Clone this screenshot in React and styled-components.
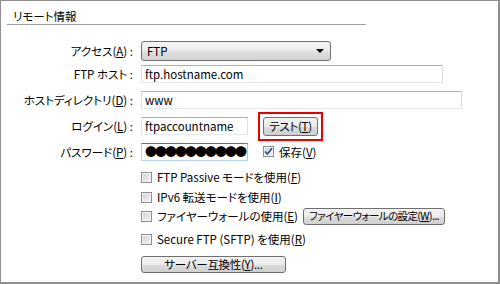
import React from "react";
import styled, { createGlobalStyle } from "styled-components";

const GlobalStyle = createGlobalStyle`
  html, body {
    margin: 0;
    padding: 0;
    background: #fff;
  }
  body {
    font-family: "Noto Sans CJK JP", "Noto Sans", sans-serif;
    font-size: 11.5px;
    color: #000;
  }
`;

function App() {
  return (
    <>
      <GlobalStyle />
      <Panel>
        <Heading>リモート情報</Heading>
        <Form>
          <Row $h={25}>
            <Label>
              アクセス(<Key>A</Key>) :
            </Label>
            <Select>
              <span>FTP</span>
              <Arrow />
            </Select>
          </Row>
          <Row $h={22}>
            <Label>FTP ホスト :</Label>
            <Field $w={302}>ftp.hostname.com</Field>
          </Row>
          <Row $h={30}>
            <Label>
              ホストディレクトリ(<Key>D</Key>) :
            </Label>
            <Field $w={321}>www</Field>
          </Row>
          <Row $h={22}>
            <Label>
              ログイン(<Key>L</Key>) :
            </Label>
            <Field $w={107}>ftpaccountname</Field>
            <Marked>
              <Button $w={55} $h={19}>
                テスト(<Key>T</Key>)
              </Button>
            </Marked>
          </Row>
          <Row $h={29}>
            <Label>
              パスワード(<Key>P</Key>) :
            </Label>
            <Field $w={107} $focus>
              <Dots>●●●●●●●●●●</Dots>
            </Field>
            <Check $ml={15}>
              <Box>
                <svg width="9" height="9" viewBox="0 0 9 9">
                  <path
                    d="M1 4.5 L3.4 7 L8 1.2"
                    fill="none"
                    stroke="#2c4fa8"
                    strokeWidth="1.8"
                  />
                </svg>
              </Box>
              <span>
                保存(<Key>V</Key>)
              </span>
            </Check>
          </Row>
          <Row $h={22} $indent>
            <Check>
              <Box />
              <span>
                FTP Passive モードを使用(<Key>F</Key>)
              </span>
            </Check>
          </Row>
          <Row $h={18} $indent>
            <Check>
              <Box />
              <span>
                IPv6 転送モードを使用(<Key>I</Key>)
              </span>
            </Check>
          </Row>
          <Row $h={20} $indent>
            <Check>
              <Box />
              <span>
                ファイヤーウォールの使用(<Key>E</Key>)
              </span>
            </Check>
            <Button $w={142} $h={17} $push $tight>
              ファイヤーウォールの設定(<Key>W</Key>)...
            </Button>
          </Row>
          <Row $h={26} $indent>
            <Check>
              <Box />
              <span>
                Secure FTP (SFTP) を使用(<Key>R</Key>)
              </span>
            </Check>
          </Row>
          <Row $h={24} $indent>
            <Button $w={145} $h={17}>
              サーバー互換性(<Key>Y</Key>)...
            </Button>
          </Row>
        </Form>
      </Panel>
    </>
  );
}

const Panel = styled.div`
  box-sizing: border-box;
  width: 500px;
  height: 284px;
  border: 1px solid #8f8f8f;
  border-right-width: 2px;
  border-bottom-width: 2px;
  background: #fff;
  overflow: hidden;
  font-feature-settings: "palt";
`;

const Heading = styled.div`
  box-sizing: border-box;
  width: 359px;
  height: 24px;
  margin-left: 6px;
  padding: 8px 0 0 6px;
  line-height: 14px;
  border-bottom: 1px solid #a0a0a0;
`;

const Form = styled.div`
  display: flex;
  flex-direction: column;
  margin-top: 13px;
`;

const Row = styled.div`
  display: flex;
  align-items: center;
  height: ${(p) => p.$h}px;
  padding-left: ${(p) => (p.$indent ? "140px" : "0")};
`;

const Label = styled.div`
  flex-shrink: 0;
  width: 132px;
  margin-right: 8px;
  text-align: right;
  white-space: nowrap;
`;

const Key = styled.span`
  text-decoration: underline;
  text-underline-offset: 1px;
`;

const Select = styled.div`
  box-sizing: border-box;
  display: flex;
  align-items: center;
  justify-content: space-between;
  width: 190px;
  height: 20px;
  padding: 0 6px 0 5px;
  border: 1px solid #707070;
  border-radius: 3px;
  background: linear-gradient(#f4f4f4 0%, #ececec 45%, #dedede 55%, #d4d4d4 100%);
`;

const Arrow = styled.span`
  width: 0;
  height: 0;
  border-left: 4px solid transparent;
  border-right: 4px solid transparent;
  border-top: 4px solid #000;
`;

const Field = styled.div`
  box-sizing: border-box;
  flex-shrink: 0;
  width: ${(p) => p.$w}px;
  height: 18px;
  padding: 0 3px;
  line-height: 16px;
  white-space: nowrap;
  overflow: hidden;
  border: 1px solid;
  border-color: ${(p) =>
    p.$focus
      ? "#3d7bad #a4c9e3 #b7d9ed #b5cfe7"
      : "#abadb3 #dbdfe6 #e3e9ef #e2e3ea"};
  background: #fff;
`;

const Dots = styled.span`
  font-size: 12px;
  letter-spacing: -2px;
`;

const Marked = styled.div`
  flex-shrink: 0;
  display: flex;
  margin-left: 10px;
  padding: 3px;
  border: 2px solid #e60000;
`;

const Button = styled.button`
  box-sizing: border-box;
  flex-shrink: 0;
  width: ${(p) => p.$w}px;
  height: ${(p) => p.$h}px;
  margin-left: ${(p) => (p.$push ? "auto" : "0")};
  margin-right: ${(p) => (p.$push ? "53px" : "0")};
  padding: 0;
  font: inherit;
  font-size: ${(p) => (p.$tight ? "10.5px" : "11.5px")};
  line-height: 14px;
  color: #000;
  white-space: nowrap;
  letter-spacing: ${(p) => (p.$tight ? "-0.6px" : "-0.3px")};
  border: 1px solid #707070;
  border-radius: 3px;
  background: linear-gradient(#f2f2f2 0%, #ebebeb 50%, #dddddd 51%, #cfcfcf 100%);
`;

const Check = styled.div`
  display: flex;
  align-items: center;
  gap: 5px;
  margin-left: ${(p) => p.$ml || 0}px;
  white-space: nowrap;
`;

const Box = styled.span`
  box-sizing: border-box;
  display: flex;
  align-items: center;
  justify-content: center;
  flex-shrink: 0;
  width: 11px;
  height: 11px;
  border: 1px solid #8e8f8f;
  box-shadow: inset 0 0 0 1px #f4f4f4;
  background: linear-gradient(135deg, #cfcfcf, #f6f6f6);
`;

export default App;
